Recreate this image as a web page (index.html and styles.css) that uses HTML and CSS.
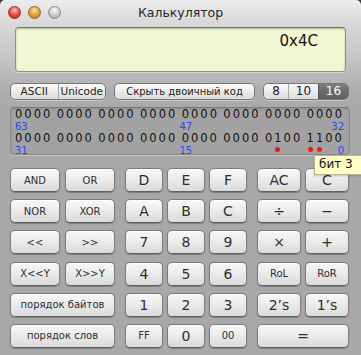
FILE: index.html
```html
<!DOCTYPE html>
<html lang="ru">
<head>
    <meta charset="UTF-8">
    <title>Калькулятор</title>
    <link rel="stylesheet" href="styles.css">
</head>
<body>
<div class="window">
    <div class="titlebar">
        <div class="lights">
            <span class="light red"></span>
            <span class="light orange"></span>
            <span class="light grey"></span>
        </div>
        <div class="title">Калькулятор</div>
    </div>

    <div class="display"><span class="value">0x4C</span></div>

    <div class="toolbar">
        <div class="seg seg-enc"><span>ASCII</span><span>Unicode</span></div>
        <div class="pill hide-bits">Скрыть двоичный код</div>
        <div class="seg seg-base"><span>8</span><span>10</span><span class="active">16</span></div>
    </div>

    <div class="bits">
        <div class="bit-row">
            <span>0000</span><span>0000</span><span>0000</span><span>0000</span>
            <span>0000</span><span>0000</span><span>0000</span><span>0000</span>
        </div>
        <div class="bit-labels">
            <span>63</span>
            <div class="half"><span>47</span><span>32</span></div>
        </div>
        <div class="bit-row">
            <span>0000</span><span>0000</span><span>0000</span><span>0000</span>
            <span>0000</span><span>0000</span><span>0<i class="on">1</i>00</span><span><i class="on">1</i><i class="on">1</i>00</span>
        </div>
        <div class="bit-labels">
            <span>31</span>
            <div class="half"><span>15</span><span>0</span></div>
        </div>
    </div>

    <div class="keys">
        <div class="pad pad-logic">
            <button class="key">AND</button>
            <button class="key">OR</button>
            <button class="key">NOR</button>
            <button class="key">XOR</button>
            <button class="key">&lt;&lt;</button>
            <button class="key">&gt;&gt;</button>
            <button class="key">X&lt;&lt;Y</button>
            <button class="key">X&gt;&gt;Y</button>
            <button class="key wide">порядок байтов</button>
            <button class="key wide">порядок слов</button>
        </div>
        <div class="pad pad-hex">
            <button class="key big">D</button>
            <button class="key big">E</button>
            <button class="key big">F</button>
            <button class="key big">A</button>
            <button class="key big">B</button>
            <button class="key big">C</button>
            <button class="key big">7</button>
            <button class="key big">8</button>
            <button class="key big">9</button>
            <button class="key big">4</button>
            <button class="key big">5</button>
            <button class="key big">6</button>
            <button class="key big">1</button>
            <button class="key big">2</button>
            <button class="key big">3</button>
            <button class="key">FF</button>
            <button class="key big">0</button>
            <button class="key">00</button>
        </div>
        <div class="pad pad-ops">
            <button class="key big">AC</button>
            <button class="key big">C</button>
            <button class="key big">÷</button>
            <button class="key big">−</button>
            <button class="key big">×</button>
            <button class="key big">+</button>
            <button class="key">RoL</button>
            <button class="key">RoR</button>
            <button class="key big">2’s</button>
            <button class="key big">1’s</button>
            <button class="key big wide">=</button>
        </div>
    </div>

    <div class="tooltip">бит 3</div>
</div>
</body>
</html>
```

FILE: styles.css
```css
* {
    box-sizing: border-box;
}
html, body {
    margin: 0;
    padding: 0;
}
body {
    width: 361px;
    height: 355px;
    overflow: hidden;
    background: #3a3a3a;
    font-family: "DejaVu Sans", "Liberation Sans", sans-serif;
    color: #2a2a2a;
}
.window {
    position: relative;
    width: 361px;
    height: 355px;
    border-radius: 5px 5px 0 0;
    overflow: hidden;
    background: linear-gradient(#ededed 0, #d9d9d9 22px, #c4c4c4 60px, #adadad 92px, #a8a8a8 110px, #a8a8a8 100%);
}

/* title bar */
.titlebar {
    height: 22px;
    display: grid;
    grid-template-columns: 1fr auto 1fr;
    align-items: center;
}
.lights {
    display: flex;
    gap: 7px;
    padding-left: 8px;
    padding-top: 2px;
}
.light {
    width: 13px;
    height: 13px;
    border-radius: 50%;
}
.light.red {
    background: radial-gradient(circle at 50% 30%, #ffc2b8 0, #f0564d 45%, #b91f18 100%);
    border: 1px solid #8e2a24;
}
.light.orange {
    background: radial-gradient(circle at 50% 30%, #ffe0a6 0, #eda63a 45%, #b66f18 100%);
    border: 1px solid #94602a;
}
.light.grey {
    background: radial-gradient(circle at 50% 30%, #fafafa 0, #d2d2d2 45%, #9d9d9d 100%);
    border: 1px solid #8a8a8a;
}
.title {
    font-size: 12.5px;
    color: #262626;
    padding-top: 2px;
}

/* display */
.display {
    margin: 5px 15px 0 15px;
    height: 45px;
    background: #f0f7d2;
    border: 1px solid #8f8f8f;
    border-top-color: #6f6f6f;
    border-radius: 4px;
    box-shadow: inset 0 1px 2px rgba(0, 0, 0, 0.25), 0 1px 0 rgba(255, 255, 255, 0.4);
    text-align: right;
    padding: 3px 27px 0 0;
}
.value {
    font-size: 15px;
    color: #111;
}

/* toolbar row */
.toolbar {
    display: flex;
    gap: 8px;
    margin-top: 11px;
    padding: 0 10px;
    height: 17px;
}
.seg, .pill {
    display: flex;
    height: 17px;
    border: 1px solid #777;
    border-radius: 5px;
    background: linear-gradient(#fbfbfb, #dcdcdc);
    box-shadow: 0 1px 0 rgba(255, 255, 255, 0.35);
    font-size: 10px;
    line-height: 15px;
    color: #222;
    overflow: hidden;
}
.seg span {
    flex: 1;
    text-align: center;
    border-left: 1px solid #a6a6a6;
}
.seg span:first-child {
    border-left: none;
}
.seg-enc {
    width: 96px;
    font-size: 10.5px;
}
.seg-base {
    width: 86px;
    font-size: 12px;
}
.seg-base span:nth-child(1) {
    flex: 0 0 24px;
}
.seg-base span:nth-child(2) {
    flex: 0 0 30px;
}
.seg-base .active {
    background: linear-gradient(#7d7d7d, #5c5c5c);
    color: #fff;
    border-left-color: #555;
}
.hide-bits {
    width: 141px;
    justify-content: center;
}

/* binary panel */
.bits {
    margin: 7px 11px 0 10px;
    height: 48px;
    padding: 0 5px 0 4px;
    background: #a2a2a2;
    border: 1px solid #8a8a8a;
    border-top-color: #7a7a7a;
    border-radius: 4px;
    box-shadow: inset 0 1px 2px rgba(0, 0, 0, 0.15), 0 1px 0 rgba(255, 255, 255, 0.3);
}
.bit-row {
    display: flex;
    justify-content: space-between;
    height: 13px;
    line-height: 13px;
    font-size: 11.5px;
    letter-spacing: 2px;
    color: #111;
}
.bit-row i {
    font-style: normal;
}
.bit-row .on {
    position: relative;
}
.bit-row .on::after {
    content: "";
    position: absolute;
    left: 1px;
    top: 16px;
    width: 5px;
    height: 5px;
    border-radius: 50%;
    background: #ff1010;
}
.bit-labels {
    display: grid;
    grid-template-columns: 1fr 1fr;
    height: 11px;
    line-height: 11px;
    font-size: 10px;
    color: #2446ff;
}
.half {
    display: flex;
    justify-content: space-between;
}

/* keypad */
.keys {
    display: flex;
    gap: 10px;
    margin-top: 13px;
    padding: 0 10px;
}
.pad {
    display: grid;
    grid-auto-rows: 25px;
    row-gap: 6.2px;
}
.pad-logic {
    grid-template-columns: 50px 50px;
    column-gap: 5px;
}
.pad-hex {
    grid-template-columns: 38px 38px 38px;
    column-gap: 4px;
}
.pad-ops {
    grid-template-columns: 44px 44px;
    column-gap: 4px;
}
.key {
    height: 24px;
    margin: 0;
    padding: 0;
    border: 1px solid #7b7b7b;
    border-bottom-color: #5f5f5f;
    border-radius: 5px;
    background: linear-gradient(#f7f7f7 0, #ececec 45%, #dadada 100%);
    box-shadow: 0 1px 1px rgba(0, 0, 0, 0.25), inset 0 1px 0 #fff;
    font-family: "DejaVu Sans", "Liberation Sans", sans-serif;
    font-size: 10px;
    color: #2e2e2e;
}
.key.big {
    font-size: 14px;
}
.key.wide {
    grid-column: span 2;
}

.tooltip {
    position: absolute;
    left: 314px;
    top: 155px;
    width: 52px;
    height: 20px;
    padding: 1px 0 0 4px;
    background: #ffffc6;
    border: 1px solid #b4b49a;
    font-size: 12px;
    color: #111;
    box-shadow: 0 1px 2px rgba(0, 0, 0, 0.2);
}
```
